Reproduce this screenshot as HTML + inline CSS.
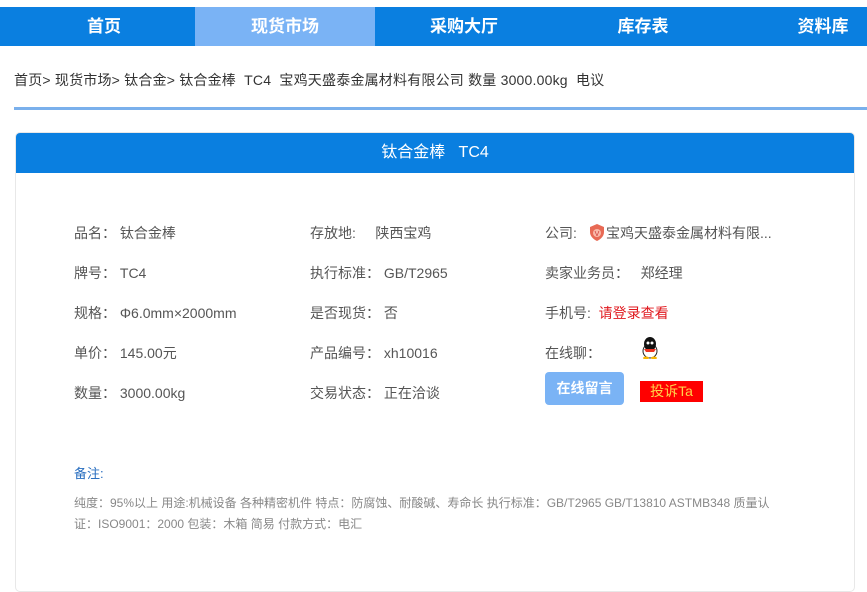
<!DOCTYPE html>
<html><head><meta charset="utf-8"><style>
*{margin:0;padding:0;box-sizing:border-box}
body{width:867px;height:537px;overflow:hidden;background:#fff;font-family:"Liberation Sans","Noto Sans CJK SC",sans-serif;position:relative}
.nav{position:absolute;top:7px;left:0;width:867px;height:39px;background:#0a7fe0}
.nav div{position:absolute;top:0;height:39px;width:180px;line-height:39px;text-align:center;color:#fff;font-size:17px;font-weight:bold}
.bc{position:absolute;left:14px;top:70px;font-size:14px;color:#333;letter-spacing:0.2px}
.line{position:absolute;left:14px;top:107px;width:853px;height:3px;background:#7ab0ec}
.card{position:absolute;left:15px;top:132px;width:840px;height:460px;border:1px solid #e8e8e8;border-radius:5px;overflow:hidden}
.hd{height:40px;background:#0a7fe0;color:#fff;text-align:center;line-height:40px;font-size:16px}
.t{position:absolute;font-size:14px;color:#555;white-space:nowrap}
</style></head><body>
<div class="nav">
<div style="left:14px">首页</div>
<div style="left:195px;background:#7ab3f5">现货市场</div>
<div style="left:374px">采购大厅</div>
<div style="left:553px">库存表</div>
<div style="left:733px">资料库</div>
</div>
<div class="bc">首页&gt; 现货市场&gt; 钛合金&gt; 钛合金棒&nbsp; TC4&nbsp; 宝鸡天盛泰金属材料有限公司 数量 3000.00kg&nbsp; 电议</div>
<div class="line"></div>
<div class="card"><div class="hd">钛合金棒&nbsp;&nbsp; TC4</div></div>
<div class="t" style="left:74px;top:223px">品名：&nbsp;钛合金棒</div>
<div class="t" style="left:74px;top:263px">牌号：&nbsp;TC4</div>
<div class="t" style="left:74px;top:303px">规格：&nbsp;Φ6.0mm×2000mm</div>
<div class="t" style="left:74px;top:343px">单价：&nbsp;145.00元</div>
<div class="t" style="left:74px;top:383px">数量：&nbsp;3000.00kg</div>
<div class="t" style="left:310px;top:223px">存放地:&nbsp;&nbsp;&nbsp;&nbsp; 陕西宝鸡</div>
<div class="t" style="left:310px;top:263px">执行标准：&nbsp;GB/T2965</div>
<div class="t" style="left:310px;top:303px">是否现货：&nbsp;否</div>
<div class="t" style="left:310px;top:343px">产品编号：&nbsp;xh10016</div>
<div class="t" style="left:310px;top:383px">交易状态：&nbsp;正在洽谈</div>
<div class="t" style="left:545px;top:223px">公司:</div>
<div class="t" style="left:606px;top:223px">宝鸡天盛泰金属材料有限...</div>
<svg style="position:absolute;left:590px;top:224px" width="14" height="17" viewBox="0 0 14 17"><path d="M7 0L14 3V8C14 12 11 15 7 17C3 15 0 12 0 8V3Z" fill="#e86a55"/><circle cx="7" cy="9" r="4" fill="#f9b8a8"/><text x="7" y="12" font-size="7" text-anchor="middle" fill="#c33">V</text></svg>
<div class="t" style="left:545px;top:263px">卖家业务员：&nbsp;&nbsp;&nbsp;郑经理</div>
<div class="t" style="left:545px;top:303px">手机号:&nbsp;&nbsp;<span style="color:#e0181e">请登录查看</span></div>
<div class="t" style="left:545px;top:343px">在线聊：</div>
<svg style="position:absolute;left:640px;top:337px" width="20" height="22" viewBox="0 0 20 22"><ellipse cx="10" cy="14" rx="7" ry="7" fill="#fff" stroke="#222"/><ellipse cx="10" cy="7" rx="6" ry="7" fill="#111"/><circle cx="8" cy="6" r="1.5" fill="#fff"/><circle cx="12" cy="6" r="1.5" fill="#fff"/><path d="M4 12h12l-2 3h-8z" fill="#e32"/><ellipse cx="6" cy="21" rx="3" ry="1.5" fill="#f7b500"/><ellipse cx="14" cy="21" rx="3" ry="1.5" fill="#f7b500"/></svg>
<div style="position:absolute;left:545px;top:372px;width:79px;height:33px;background:#7ab3f5;border-radius:4px;color:#fff;font-size:14px;font-weight:bold;text-align:center;line-height:33px">在线留言</div>
<div style="position:absolute;left:640px;top:381px;width:63px;height:21px;background:#f00;color:#ffd24a;font-size:14px;text-align:center;line-height:21px">投诉Ta</div>
<div class="t" style="left:74px;top:463px;color:#2a6fc0;font-size:13px">备注:</div>
<div class="t" style="left:74px;top:494px;color:#888;font-size:12px">纯度：95%以上 用途:机械设备 各种精密机件 特点：防腐蚀、耐酸碱、寿命长 执行标准：GB/T2965 GB/T13810 ASTMB348 质量认</div>
<div class="t" style="left:74px;top:515px;color:#888;font-size:12px">证：ISO9001：2000 包装：木箱 简易 付款方式：电汇</div>
</body></html>
